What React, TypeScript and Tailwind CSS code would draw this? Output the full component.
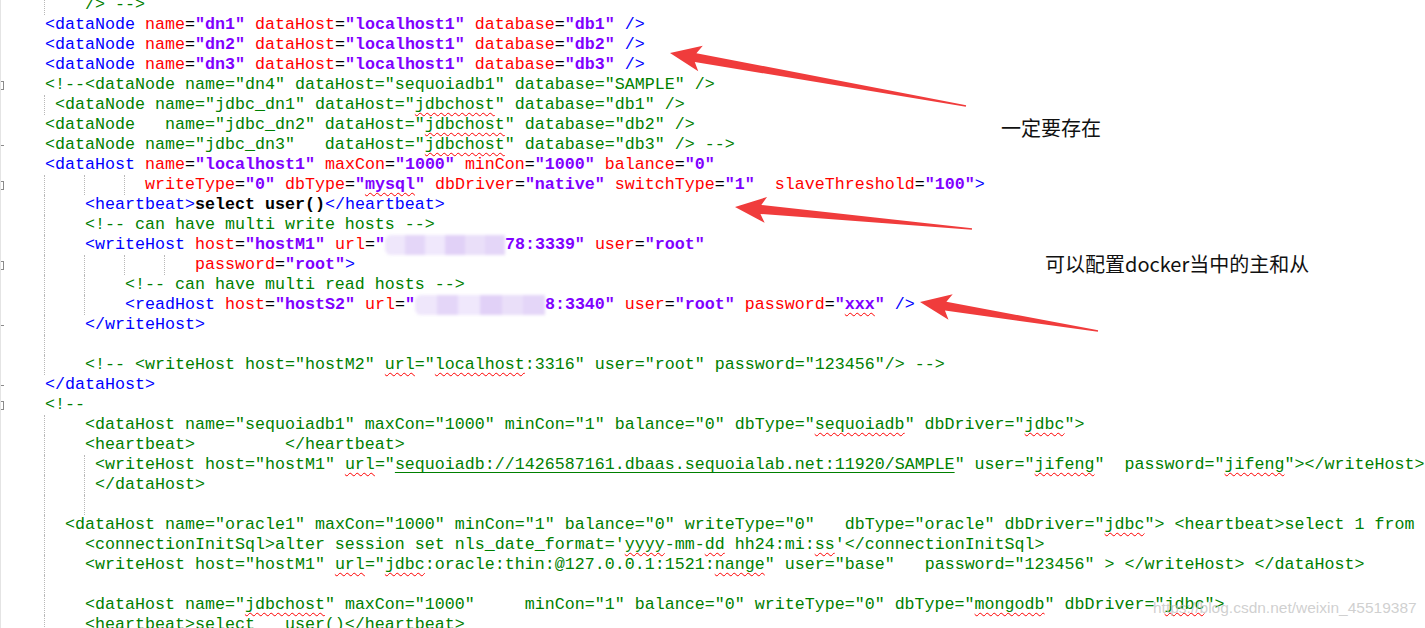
import React from "react";

// Token kinds for the xml highlighter
type Kind = "tag" | "attr" | "eq" | "val" | "cm" | "txt" | "ws";
type Tok = { t: string; k: Kind };

const B12 = "§".repeat(12);
const B13 = "§".repeat(13);

// [text, indent guide columns, gutter marker]
const LINES: [string, number[], string?][] = [
  ["    /> -->", [0]],
  ['<dataNode name="dn1" dataHost="localhost1" database="db1" />', []],
  ['<dataNode name="dn2" dataHost="localhost1" database="db2" />', []],
  ['<dataNode name="dn3" dataHost="localhost1" database="db3" />', []],
  ['<!--<dataNode name="dn4" dataHost="sequoiadb1" database="SAMPLE" />', [], "box"],
  [' <dataNode name="jdbc_dn1" dataHost="jdbchost" database="db1" />', [0]],
  ['<dataNode   name="jdbc_dn2" dataHost="jdbchost" database="db2" />', []],
  ['<dataNode name="jdbc_dn3"   dataHost="jdbchost" database="db3" /> -->', [], "tick"],
  ['<dataHost name="localhost1" maxCon="1000" minCon="1000" balance="0"', []],
  ['          writeType="0" dbType="mysql" dbDriver="native" switchType="1"  slaveThreshold="100">', [0, 4, 8], "box"],
  ["    <heartbeat>select user()</heartbeat>", [0]],
  ["    <!-- can have multi write hosts -->", [0]],
  [`    <writeHost host="hostM1" url="${B12}78:3339" user="root"`, [0]],
  ['               password="root">', [0, 4, 8, 12], "box"],
  ["        <!-- can have multi read hosts -->", [0, 4]],
  [`        <readHost host="hostS2" url="${B13}8:3340" user="root" password="xxx" />`, [0, 4]],
  ["    </writeHost>", [0], "tick"],
  ["    ", [0]],
  ['    <!-- <writeHost host="hostM2" url="localhost:3316" user="root" password="123456"/> -->', [0]],
  ["</dataHost>", [], "tick"],
  ["<!--", [], "box"],
  ['    <dataHost name="sequoiadb1" maxCon="1000" minCon="1" balance="0" dbType="sequoiadb" dbDriver="jdbc">', [0]],
  ["    <heartbeat>         </heartbeat>", [0]],
  ['     <writeHost host="hostM1" url="sequoiadb://1426587161.dbaas.sequoialab.net:11920/SAMPLE" user="jifeng"  password="jifeng"></writeHost>', [0, 4]],
  ["     </dataHost>", [0, 4]],
  ["     ", [0, 4]],
  ['  <dataHost name="oracle1" maxCon="1000" minCon="1" balance="0" writeType="0"   dbType="oracle" dbDriver="jdbc"> <heartbeat>select 1 from dual</heartbeat>', [0]],
  ["    <connectionInitSql>alter session set nls_date_format='yyyy-mm-dd hh24:mi:ss'</connectionInitSql>", [0]],
  ['    <writeHost host="hostM1" url="jdbc:oracle:thin:@127.0.0.1:1521:nange" user="base"   password="123456" > </writeHost> </dataHost>', [0]],
  ["    ", [0]],
  ['    <dataHost name="jdbchost" maxCon="1000"     minCon="1" balance="0" writeType="0" dbType="mongodb" dbDriver="jdbc">', [0]],
  ["    <heartbeat>select   user()</heartbeat>", [0]],
];

const KIND_CLASS: Record<Kind, string> = {
  tag: "text-[#0000ff]",
  attr: "text-[#ff0000]",
  eq: "text-black",
  val: "font-bold text-[#8000ff]",
  cm: "text-[#008000]",
  txt: "font-bold text-black",
  ws: "",
};

// Simple line lexer, keeps comment / tag state between lines
function lex(lines: string[]): Tok[][] {
  let inComment = true;
  let inTag = false;
  return lines.map((line) => {
    const out: Tok[] = [];
    let i = 0;
    while (i < line.length) {
      if (inComment) {
        const end = line.indexOf("-->", i);
        if (end < 0) {
          out.push({ t: line.slice(i), k: "cm" });
          i = line.length;
        } else {
          out.push({ t: line.slice(i, end + 3), k: "cm" });
          i = end + 3;
          inComment = false;
        }
        continue;
      }
      if (line.startsWith("<!--", i)) {
        inComment = true;
        out.push({ t: "<!--", k: "cm" });
        i += 4;
        continue;
      }
      const ch = line[i];
      if (inTag) {
        if (ch === '"' || ch === "§") {
          const e = line.indexOf('"', i + 1);
          out.push({ t: line.slice(i, e + 1), k: "val" });
          i = e + 1;
        } else if (line.startsWith("/>", i)) {
          out.push({ t: "/>", k: "tag" });
          i += 2;
          inTag = false;
        } else if (ch === ">") {
          out.push({ t: ">", k: "tag" });
          i += 1;
          inTag = false;
        } else if (ch === "=") {
          out.push({ t: "=", k: "eq" });
          i += 1;
        } else if (ch === " ") {
          let j = i;
          while (line[j] === " ") j++;
          out.push({ t: line.slice(i, j), k: "ws" });
          i = j;
        } else {
          let j = i;
          while (j < line.length && !/[\s=>/"]/.test(line[j])) j++;
          out.push({ t: line.slice(i, j), k: "attr" });
          i = j;
        }
      } else if (ch === "<") {
        let j = i + 1;
        if (line[j] === "/") j++;
        while (j < line.length && /[\w]/.test(line[j])) j++;
        out.push({ t: line.slice(i, j), k: "tag" });
        i = j;
        inTag = true;
      } else {
        let j = line.indexOf("<", i);
        if (j < 0) j = line.length;
        out.push({ t: line.slice(i, j), k: "txt" });
        i = j;
      }
    }
    return out;
  });
}

function Blur({ n }: { n: number }) {
  return (
    <span
      className={`inline-flex align-top h-5 blur-[1.5px] rounded-l-md overflow-hidden ${
        n === 12 ? "w-[120px]" : "w-[130px]"
      }`}
    >
      <span className="flex-1 bg-[#efe7fb]" />
      <span className="flex-1 bg-[#e4d6f8]" />
      <span className="flex-1 bg-[#f0e8fc]" />
      <span className="flex-1 bg-[#e1d1f7]" />
      <span className="flex-1 bg-[#eadff9]" />
      <span className="flex-1 bg-[#e4d6f8]" />
    </span>
  );
}

const DECO =
  /(sequoiadb:\/\/[^"]+)|(§+)|\b(jdbchost|mysql|xxx|url|localhost|sequoiadb|jdbc|jifeng|yyyy|dd|ss|nange|mongodb)\b/g;

function decorate(text: string, spell: boolean): React.ReactNode[] {
  const out: React.ReactNode[] = [];
  let last = 0;
  let m: RegExpExecArray | null;
  DECO.lastIndex = 0;
  while ((m = DECO.exec(text))) {
    if (m[3] && !spell) continue;
    if (m.index > last) out.push(text.slice(last, m.index));
    if (m[1]) {
      out.push(
        <span key={m.index} className="underline decoration-[#008000] underline-offset-[3px]">
          {m[1]}
        </span>
      );
    } else if (m[2]) {
      out.push(<Blur key={m.index} n={m[2].length} />);
    } else {
      out.push(
        <span
          key={m.index}
          className="underline decoration-wavy decoration-[#ff0000] decoration-1 underline-offset-[3px]"
        >
          {m[3]}
        </span>
      );
    }
    last = DECO.lastIndex;
  }
  if (last < text.length) out.push(text.slice(last));
  return out;
}

// Leading spaces split at guide columns, each part with a dotted left edge
function Indent({ n, guides }: { n: number; guides: number[] }) {
  if (n === 0) return null;
  const stops = [...guides.filter((g) => g < n), n];
  const parts: React.ReactNode[] = [];
  if (stops[0] > 0) parts.push(<span key="pre">{" ".repeat(stops[0])}</span>);
  for (let s = 0; s < stops.length - 1; s++) {
    parts.push(
      <span
        key={s}
        className="inline-block h-5 align-top -ml-px border-l border-dotted border-[#b8b8b8]"
      >
        {" ".repeat(stops[s + 1] - stops[s])}
      </span>
    );
  }
  return <>{parts}</>;
}

function Marker({ type }: { type?: string }) {
  if (type === "box") return <span className="w-[3px] h-[9px] border-y border-r border-[#8a8a8a]" />;
  if (type === "tick") return <span className="w-[3px] h-px bg-[#8a8a8a]" />;
  return null;
}

function arrowPoints(tx: number, ty: number, ex: number, ey: number) {
  const dx = ex - tx;
  const dy = ey - ty;
  const len = Math.hypot(dx, dy);
  const ux = dx / len;
  const uy = dy / len;
  const nx = -uy;
  const ny = ux;
  const p = (a: number, b: number) => `${tx + ux * a + nx * b},${ty + uy * a + ny * b}`;
  return [p(0, 0), p(31, 13), p(26, 4.5), p(len, 0.8), p(len, -0.8), p(26, -4.5), p(31, -13)].join(" ");
}

export default function App() {
  const toks = lex(LINES.map(([text]) => text.trimStart()));

  return (
    <div className="relative w-[1425px] h-[628px] overflow-hidden bg-white">
      {/* Editor */}
      <div className="-mt-[5px] font-['Liberation_Mono',monospace] text-[16.67px] leading-5">
        {LINES.map(([text, guides, marker], li) => {
          const indent = text.length - text.trimStart().length;
          return (
            <div key={li} className="flex h-5">
              <div className="w-[45px] shrink-0 flex items-center">
                <div className="w-px h-5 bg-[#e4e4e4]" />
                <Marker type={marker} />
              </div>
              <div className="whitespace-pre">
                <Indent n={indent} guides={guides} />
                {toks[li].map((tok, ti) => (
                  <span key={ti} className={KIND_CLASS[tok.k]}>
                    {decorate(tok.t, tok.k !== "attr")}
                  </span>
                ))}
              </div>
            </div>
          );
        })}
      </div>

      {/* Annotation arrows */}
      <svg className="absolute inset-0 pointer-events-none" width={1425} height={628}>
        <polygon points={arrowPoints(670, 53, 966, 106)} fill="#f03c3c" />
        <polygon points={arrowPoints(735, 207, 972, 229)} fill="#f03c3c" />
        <polygon points={arrowPoints(920, 302, 1098, 331)} fill="#f03c3c" />
      </svg>

      {/* Notes */}
      <div className="absolute left-[1001px] top-[116px] text-[20px] leading-6 text-[#111] font-['Noto_Sans_CJK_SC',sans-serif]">
        一定要存在
      </div>
      <div className="absolute left-[1045px] top-[252px] text-[20px] leading-6 text-[#111] font-['Noto_Sans_CJK_SC',sans-serif]">
        可以配置docker当中的主和从
      </div>

      {/* Watermark */}
      <div className="absolute left-[1153px] top-[598px] text-[15.5px] leading-5 text-[#c4c4c4]/80 font-['Liberation_Sans',sans-serif]">
        https://blog.csdn.net/weixin_45519387
      </div>
    </div>
  );
}
